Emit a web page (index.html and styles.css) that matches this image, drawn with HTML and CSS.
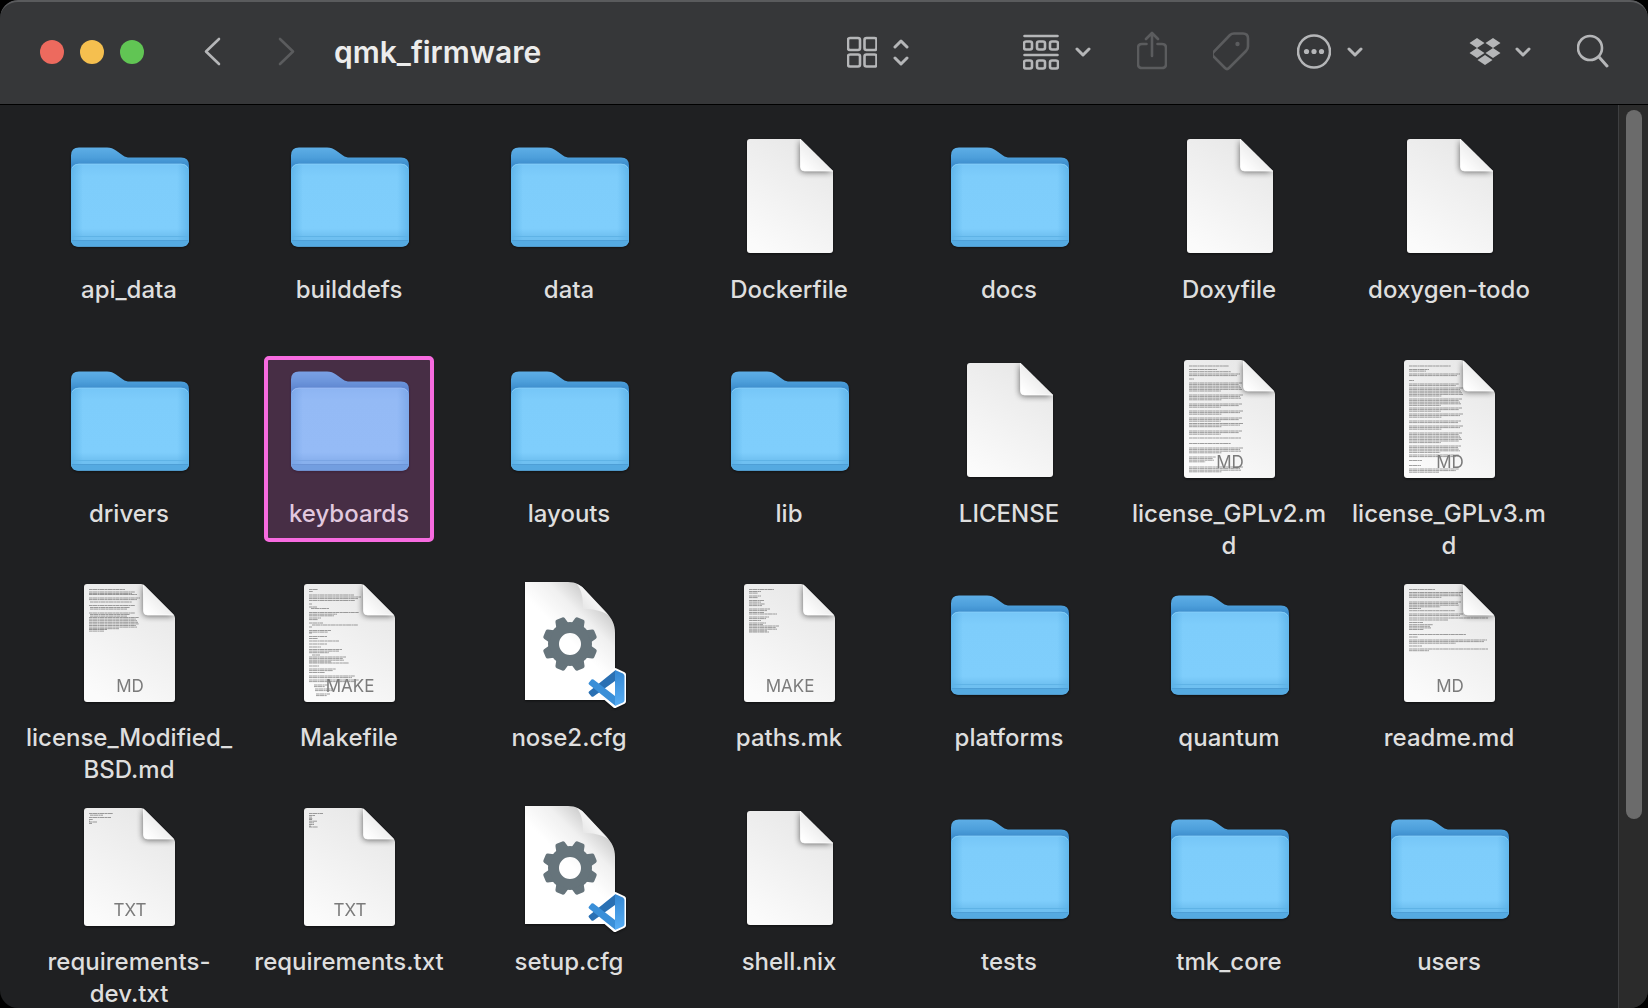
FILE: index.html
```html
<!DOCTYPE html>
<html lang="en">
<head>
    <meta charset="UTF-8">
    <meta name="viewport" content="width=device-width, initial-scale=1.0">
    <title>qmk_firmware</title>
    <link rel="stylesheet" href="styles.css">
</head>
<body>
    <!-- shared icon shapes -->
    <svg class="sprite" aria-hidden="true">
        <defs>
            <linearGradient id="folderBack" x1="0" y1="0" x2="0" y2="1">
                <stop offset="0" stop-color="#5eaee6"/>
                <stop offset="0.1" stop-color="#4d9fdb"/>
                <stop offset="0.18" stop-color="#3b8bcb"/>
            </linearGradient>
            <linearGradient id="folderFront" x1="0" y1="0" x2="0" y2="1">
                <stop offset="0" stop-color="#76c6f7"/>
                <stop offset="0.15" stop-color="#7ecdfb"/>
                <stop offset="0.78" stop-color="#7fcefc"/>
                <stop offset="0.88" stop-color="#6fc0f1"/>
            </linearGradient>
            <linearGradient id="folderSides" x1="0" y1="0" x2="1" y2="0">
                <stop offset="0" stop-color="#4fa9e2" stop-opacity="0.6"/>
                <stop offset="0.1" stop-color="#4fa9e2" stop-opacity="0"/>
                <stop offset="0.9" stop-color="#4fa9e2" stop-opacity="0"/>
                <stop offset="1" stop-color="#4fa9e2" stop-opacity="0.6"/>
            </linearGradient>
            <linearGradient id="paper" x1="0.8" y1="0" x2="0.3" y2="1">
                <stop offset="0" stop-color="#e6e6e6"/>
                <stop offset="1" stop-color="#fbfbfb"/>
            </linearGradient>
            <linearGradient id="fold" x1="0.7" y1="0.3" x2="0.1" y2="0.9">
                <stop offset="0" stop-color="#e4e4e4"/>
                <stop offset="1" stop-color="#ffffff"/>
            </linearGradient>
            <linearGradient id="cfgPaper" x1="0.8" y1="0.1" x2="0.5" y2="0.5">
                <stop offset="0" stop-color="#c4c4c4"/>
                <stop offset="0.5" stop-color="#f0f0f0"/>
                <stop offset="1" stop-color="#ffffff"/>
            </linearGradient>
            <linearGradient id="cfgFold" x1="0.8" y1="0.3" x2="0.1" y2="0.9">
                <stop offset="0" stop-color="#ffffff"/>
                <stop offset="1" stop-color="#e2e2e2"/>
            </linearGradient>
            <linearGradient id="codePanel" x1="0" y1="0" x2="0" y2="1">
                <stop offset="0" stop-color="#3487d2"/>
                <stop offset="1" stop-color="#56adf5"/>
            </linearGradient>
            <filter id="foldShadow" x="-50%" y="-50%" width="200%" height="200%">
                <feGaussianBlur stdDeviation="3"/>
            </filter>
            <clipPath id="clipBlank"><path d="M26 7h50.500l32.500 32v79a3 3 0 0 1-3 3H26a3 3 0 0 1-3-3V10a3 3 0 0 1 3-3z"/></clipPath>
            <clipPath id="clipText"><path d="M23 4h54q2 0 4 2l28 28q2 2 2 4v81a3 3 0 0 1-3 3H23a3 3 0 0 1-3-3V7a3 3 0 0 1 3-3z"/></clipPath>
        </defs>

        <symbol id="folder" viewBox="0 0 128 128">
            <path fill="url(#folderBack)" d="M15 15.500h28c4 0 6 1 9 3l7 5c2 1.500 4 2 7 2h51q8 0 8 8v73q0 8-8 8H15q-8 0-8-8v-83q0-8 8-8z"/>
            <rect x="7" y="32" width="118" height="82.500" rx="7" fill="url(#folderFront)"/>
            <rect x="7" y="32" width="118" height="82.500" rx="7" fill="url(#folderSides)"/>
            <path fill="#55aae1" d="M7 109h118q-1 5.500-7 5.500H14q-6 0-7-5.500z"/>
            <path stroke="#5fb3e6" stroke-width="1" d="M7 104.500h118"/>
            <path stroke="#4e9fd6" stroke-width="1" d="M8 108.500h116"/>
            <path stroke="#8fd4fb" stroke-width="0.700" fill="none" d="M8 36q2-4 7-4h102q5 0 7 4"/>
        </symbol>

        <symbol id="blank" viewBox="0 0 128 128">
            <g clip-path="url(#clipBlank)">
                <rect x="20" y="4" width="92" height="120" fill="url(#paper)"/>
                <path fill="#000" opacity="0.6" filter="url(#foldShadow)" d="M76 8v28q0 4 4 4h29z"/>
                <path fill="url(#fold)" stroke="#fff" stroke-width="0.800" d="M76.500 6v29q0 4 4 4H110z"/>
            </g>
        </symbol>

        <symbol id="textPaper" viewBox="0 0 128 128">
            <g clip-path="url(#clipText)">
                <rect x="18" y="2" width="96" height="122" fill="url(#paper)"/>
            </g>
        </symbol>

        <symbol id="textFold" viewBox="0 0 128 128">
            <g clip-path="url(#clipText)">
                <path fill="#000" opacity="0.6" filter="url(#foldShadow)" d="M79 5v27q0 4 4 4h28z"/>
                <path fill="url(#fold)" stroke="#fff" stroke-width="0.800" d="M79.500 3v28q0 4 4 4H112z"/>
            </g>
        </symbol>

        <symbol id="config" viewBox="0 0 128 128">
            <path fill="url(#cfgPaper)" d="M21 2h43c8 0 13 3 18 9l20 21c6 7 9 12 9 21v67H21z"/>
            <path fill="url(#cfgFold)" d="M73 4c5 7 6 14 6 25 9 0 18 1 25 6L82 11q-4-5-9-7z"/>
            <g fill="#66747b" transform="translate(66 64)">
                <path fill-rule="evenodd" d="M0-22a22 22 0 1 0 0 44a22 22 0 1 0 0-44zM0-11a11 11 0 1 1 0 22a11 11 0 1 1 0-22z"/>
                <g id="teeth">
                    <path id="tooth" transform="rotate(22.500)" d="M-6.500-20l1.500-6q.5-1.500 2-1.500h6q1.500 0 2 1.500l1.500 6z"/>
                    <use href="#tooth" transform="rotate(45)"/>
                    <use href="#tooth" transform="rotate(90)"/>
                    <use href="#tooth" transform="rotate(135)"/>
                </g>
                <use href="#teeth" transform="rotate(180)"/>
            </g>
            <path fill="#fff" stroke="#fff" stroke-width="5" stroke-linejoin="round" d="M111 90.500l8.500 4v27l-8.500 4-13-11-9 3-4-5 5-4-5-5 4-4 9 4z"/>
            <path fill="#2a70b3" d="M111 90.500V101L89.500 116.500q-1 .5-2 0l-2.500-3q-1-1 0-2z"/>
            <path fill="#3a8fd8" d="M111 125.500V116L89.500 99.500q-1-.5-2 0l-2.500 3q-1 1 0 2z"/>
            <path fill="url(#codePanel)" d="M111 90l8 3.500q1.500 1 1.500 2.500v24q0 1.500-1.500 2.500l-8 3.500z"/>
        </symbol>

        <symbol id="chevron" viewBox="0 0 16 12">
            <path fill="none" stroke="currentColor" stroke-width="3" stroke-linecap="round" stroke-linejoin="round" d="M2 3l6 6 6-6"/>
        </symbol>
    </svg>

    <div class="window">
        <header class="toolbar">
            <div class="lights">
                <button class="light close" aria-label="Close"></button>
                <button class="light minimize" aria-label="Minimize"></button>
                <button class="light zoom" aria-label="Zoom"></button>
            </div>

            <nav class="history">
                <button class="tool" aria-label="Back">
                    <svg width="20" height="32" viewBox="0 0 20 32"><path d="M16 3L3 15.500 16 28"/></svg>
                </button>
                <button class="tool" aria-label="Forward" disabled>
                    <svg width="20" height="32" viewBox="0 0 20 32"><path d="M4 3l13 12.500L4 28"/></svg>
                </button>
            </nav>

            <h1 class="title">qmk_firmware</h1>

            <div class="tools">
                <button class="tool" aria-label="View as icons">
                    <svg width="30" height="36" viewBox="0 0 30 36">
                        <rect x="1" y="4" width="12" height="12" rx="2"/>
                        <rect x="17.500" y="4" width="12" height="12" rx="2"/>
                        <rect x="1" y="20.500" width="12" height="12" rx="2"/>
                        <rect x="17.500" y="20.500" width="12" height="12" rx="2"/>
                    </svg>
                    <svg width="16" height="36" viewBox="0 0 16 36"><path class="thick" d="M2 13l6-6 6 6M2 24l6 6 6-6"/></svg>
                </button>
                <button class="tool group" aria-label="Group items">
                    <svg width="36" height="38" viewBox="0 0 36 38">
                        <path d="M1.500 3h33M1.500 22h33"/>
                        <rect x="1" y="8.500" width="8" height="8" rx="2"/>
                        <rect x="14" y="8.500" width="8" height="8" rx="2"/>
                        <rect x="27" y="8.500" width="8" height="8" rx="2"/>
                        <rect x="1" y="27.500" width="8" height="8" rx="2"/>
                        <rect x="14" y="27.500" width="8" height="8" rx="2"/>
                        <rect x="27" y="27.500" width="8" height="8" rx="2"/>
                    </svg>
                    <svg width="16" height="12"><use href="#chevron"/></svg>
                </button>
                <button class="tool" aria-label="Share" disabled>
                    <svg width="30" height="42" viewBox="0 0 30 42">
                        <path d="M9.500 13H5q-4 0-4 4v16q0 4 4 4h20q4 0 4-4V17q0-4-4-4h-4.500M15 25V3M9 8l6-6 6 6"/>
                    </svg>
                </button>
                <button class="tool" aria-label="Tags" disabled>
                    <svg width="38" height="40" viewBox="2 0 38 40">
                        <path d="M19 3q1.500-1.500 4-1.500h9q5 0 5 5v8q0 2.500-2 4.500L18 36q-2 2-4 0L2.500 24.500q-2-2 0-4.500z"/>
                        <circle class="solid" cx="26.500" cy="12" r="2.200"/>
                    </svg>
                </button>
                <button class="tool" aria-label="More actions">
                    <svg width="34" height="36" viewBox="0 0 34 36">
                        <circle cx="17" cy="17.500" r="16"/>
                        <circle class="solid" cx="9.500" cy="17.500" r="2.600"/>
                        <circle class="solid" cx="17" cy="17.500" r="2.600"/>
                        <circle class="solid" cx="24.500" cy="17.500" r="2.600"/>
                    </svg>
                    <svg width="16" height="12"><use href="#chevron"/></svg>
                </button>
                <button class="tool dropbox" aria-label="Dropbox">
                    <svg width="32" height="28" viewBox="0 0 32 28">
                        <path class="solid" d="M8 0l7.500 5L8 10 .5 5zM24 0l7.500 5-7.500 5-7.500-5zM8 10l7.500 5L8 20 .5 15zM24 10l7.500 5-7.500 5-7.500-5zM16 17l7.500 5-7.500 5-7.500-5z"/>
                    </svg>
                    <svg width="16" height="12"><use href="#chevron"/></svg>
                </button>
                <button class="tool" aria-label="Search">
                    <svg width="32" height="36" viewBox="0 0 32 36">
                        <circle cx="13" cy="14" r="12"/>
                        <path class="thick" d="M22 23l8 9"/>
                    </svg>
                </button>
            </div>
        </header>

        <div class="content">
            <main class="files" id="files"></main>
            <div class="track"><div class="thumb"></div></div>
        </div>
    </div>

    <script src="files.js"></script>
</body>
</html>
```

FILE: styles.css
```css
*,
*::after {
    box-sizing: border-box;
}

body {
    margin: 0;
    background-color: #000;
    font-family: Inter, "Liberation Sans", sans-serif;
    color: #dedede;
}

.sprite {
    position: absolute;
    width: 0;
    height: 0;
}

.window {
    display: flex;
    flex-direction: column;
    height: 100vh;
    overflow: hidden;
    background-color: #1f2022;
    border-radius: 18px;
}

/* toolbar */

.toolbar {
    display: flex;
    align-items: center;
    flex: none;
    height: 105px;
    padding: 0 39px 2px 40px;
    background-color: #363739;
    border-top: 2px solid #5a5b5d;
    border-bottom: 1px solid #000;
    border-radius: 18px 18px 0 0;
}

.lights {
    display: flex;
    gap: 16px;
}

.light {
    width: 24px;
    height: 24px;
    padding: 0;
    border: none;
    border-radius: 50%;
}

.close {
    background-color: #ed6a5e;
}

.minimize {
    background-color: #f5bf4f;
}

.zoom {
    background-color: #61c554;
}

.history {
    display: flex;
    gap: 53px;
    margin-left: 59px;
}

.title {
    margin: 0 0 0 38px;
    font-size: 30px;
    font-weight: 600;
    line-height: 36px;
    color: #ececec;
}

.tools {
    display: flex;
    align-items: center;
    gap: 46px;
    margin-left: auto;
}

.tool {
    display: flex;
    align-items: center;
    gap: 16px;
    padding: 0;
    border: none;
    background: none;
    color: #b5b6b8;
}

.tool:disabled {
    color: #5b5c5e;
}

.group {
    margin-left: 68px;
}

.dropbox {
    gap: 14px;
    margin-left: 60px;
}

.tool svg {
    fill: none;
    stroke: currentColor;
    stroke-width: 2.6;
    stroke-linecap: round;
    stroke-linejoin: round;
}

.tool .thick {
    stroke-width: 3;
}

.tool .solid {
    fill: currentColor;
    stroke: none;
}

/* files */

.content {
    display: flex;
    flex: 1;
    min-height: 0;
}

.files {
    display: grid;
    grid-template-columns: repeat(auto-fill, 220px);
    align-content: start;
    row-gap: 18px;
    flex: 1;
    padding: 27px 0 0 19px;
    overflow: hidden;
}

.file {
    position: relative;
    display: flex;
    flex-direction: column;
    align-items: center;
    gap: 14px;
    height: 206px;
    margin: 0;
}

.icon {
    width: 128px;
    height: 128px;
    filter: drop-shadow(0 1px 1px rgba(0, 0, 0, 0.5));
}

.name {
    font-size: 24px;
    font-weight: 500;
    line-height: 32px;
    text-align: center;
    white-space: nowrap;
}

.selected::after {
    content: "";
    position: absolute;
    top: 0;
    left: 25px;
    width: 170px;
    height: 186px;
    border: 4px solid #f76be0;
    border-radius: 5px;
    background-color: rgba(247, 107, 224, 0.19);
}

.preview {
    fill: none;
    stroke: #555;
    stroke-opacity: 0.55;
    stroke-width: 1;
    stroke-dasharray: 3 0.3 5 0.4 2 0.3 4 0.4;
}

.kind {
    fill: #7b7b7b;
    font-size: 17px;
    text-anchor: middle;
}

/* scrollbar */

.track {
    flex: none;
    width: 30px;
    padding: 5px 6px 0 7px;
    background-color: #2b2b2b;
    border-left: 1px solid #3e3f41;
}

.thumb {
    height: 79%;
    border-radius: 8px;
    background-color: #6b6b6b;
}
```

FILE: files.js
```js
// preview blocks: [y, number of lines, width, indent]
const previews = {
    gpl2: [[10, 1, 40], [13.5, 1, 28], [15.7, 1, 42], [18, 2, 51], [23, 1, 5], [27, 6, 53], [39, 4, 54], [48, 3, 53], [55, 3, 54],
        [62, 3, 53], [67.5, 3, 54], [75, 3, 53], [82, 1, 52], [87.5, 1, 42], [92, 4, 54], [101, 4, 27], [111, 4, 54]],
    gpl3: [[10, 1, 42], [13.5, 2, 20], [18, 2, 51], [24.5, 1, 5], [28, 2, 50], [32, 6, 54], [43, 5, 53], [52, 3, 53], [58, 3, 54],
        [65, 2, 52], [70, 3, 54], [77, 7, 53], [90, 5, 52], [99, 2, 50], [104.5, 1, 13], [109.5, 1, 12], [113, 3, 50]],
    bsd: [[9.5, 1, 36], [12, 2, 46], [14.5, 1, 48], [18, 2, 51], [22, 1, 42, 1], [25.5, 1, 46], [27.5, 2, 40, 1], [33, 1, 46],
        [34.5, 2, 40, 1], [37.5, 8, 50], [49.5, 2, 18]],
    makefile: [[9.5, 1, 9], [11.5, 1, 4], [15, 1, 45], [17, 2, 52], [20.5, 1, 46], [24, 1, 3], [27, 1, 8], [28.5, 1, 18, 2],
        [32.5, 1, 50], [34.2, 2, 28], [38, 2, 12], [43, 1, 14], [45, 1, 46, 3], [47, 1, 3], [50.5, 2, 22], [53, 2, 3],
        [56.5, 1, 18], [58.5, 1, 9], [61, 1, 30], [64, 1, 18], [67, 1, 12], [69.5, 3, 33], [75, 1, 8, 3], [77, 4, 37],
        [83, 1, 40], [86, 1, 10], [89, 2, 27], [92.5, 1, 16], [96, 2, 46], [100, 2, 50], [105, 2, 14, 5], [109, 2, 20, 6], [114, 2, 14, 7]],
    paths: [[9.5, 1, 25], [11.5, 2, 12], [16, 2, 12], [20.5, 2, 15], [24, 2, 16], [29, 2, 21], [32.5, 1, 15], [34, 1, 28],
        [37, 2, 20], [40.5, 1, 12], [43, 2, 17], [46, 4, 30], [52, 1, 20]],
    readme: [[9.5, 1, 26], [12.5, 4, 54], [22, 4, 52], [28.5, 1, 12], [30.7, 1, 46], [34, 2, 54], [38, 1, 79], [40, 1, 39],
        [42.5, 1, 14], [44.7, 4, 24], [54.5, 1, 57], [57, 1, 9], [60, 3, 78], [66, 1, 13], [69, 1, 79], [70.7, 1, 20]],
    reqDev: [[9.5, 1, 24], [11.2, 1, 13, 1], [13.5, 1, 22], [15.5, 2, 4], [18, 1, 8], [19.5, 2, 3]],
    req: [[9.5, 1, 14], [11.5, 3, 6], [15.5, 1, 3], [17.2, 2, 8], [20.5, 2, 5], [23, 1, 9]]
};

const files = [
    { name: 'api_data', icon: 'folder' },
    { name: 'builddefs', icon: 'folder' },
    { name: 'data', icon: 'folder' },
    { name: 'Dockerfile', icon: 'blank' },
    { name: 'docs', icon: 'folder' },
    { name: 'Doxyfile', icon: 'blank' },
    { name: 'doxygen-todo', icon: 'blank' },
    { name: 'drivers', icon: 'folder' },
    { name: 'keyboards', icon: 'folder', selected: true },
    { name: 'layouts', icon: 'folder' },
    { name: 'lib', icon: 'folder' },
    { name: 'LICENSE', icon: 'blank' },
    { name: 'license_GPLv2.m<br>d', icon: 'text', kind: 'MD', preview: 'gpl2' },
    { name: 'license_GPLv3.m<br>d', icon: 'text', kind: 'MD', preview: 'gpl3' },
    { name: 'license_Modified_<br>BSD.md', icon: 'text', kind: 'MD', preview: 'bsd' },
    { name: 'Makefile', icon: 'text', kind: 'MAKE', preview: 'makefile' },
    { name: 'nose2.cfg', icon: 'config' },
    { name: 'paths.mk', icon: 'text', kind: 'MAKE', preview: 'paths' },
    { name: 'platforms', icon: 'folder' },
    { name: 'quantum', icon: 'folder' },
    { name: 'readme.md', icon: 'text', kind: 'MD', preview: 'readme' },
    { name: 'requirements-<br>dev.txt', icon: 'text', kind: 'TXT', preview: 'reqDev' },
    { name: 'requirements.txt', icon: 'text', kind: 'TXT', preview: 'req' },
    { name: 'setup.cfg', icon: 'config' },
    { name: 'shell.nix', icon: 'blank' },
    { name: 'tests', icon: 'folder' },
    { name: 'tmk_core', icon: 'folder' },
    { name: 'users', icon: 'folder' }
];

function previewPath(blocks) {
    let d = '';
    for (const [y, count, width, indent = 0] of blocks) {
        for (let i = 0; i < count; i++) {
            // last line of a paragraph is shorter
            const w = count > 2 && i === count - 1 ? width * 0.6 : width - (i * 3) % 4;
            d += `M${25 + indent} ${y + i * 1.6}h${w}`;
        }
    }
    return d;
}

function iconMarkup(file) {
    if (file.icon !== 'text') {
        return `<use href="#${file.icon}" width="128" height="128"/>`;
    }
    return `<use href="#textPaper" width="128" height="128"/>
        <path class="preview" d="${previewPath(previews[file.preview])}"/>
        <use href="#textFold" width="128" height="128"/>
        <text class="kind" x="66" y="112">${file.kind}</text>`;
}

document.getElementById('files').innerHTML = files.map(file => `
    <figure class="file${file.selected ? ' selected' : ''}">
        <svg class="icon" viewBox="1 0 128 128" aria-hidden="true">${iconMarkup(file)}</svg>
        <figcaption class="name">${file.name}</figcaption>
    </figure>`).join('');
```
